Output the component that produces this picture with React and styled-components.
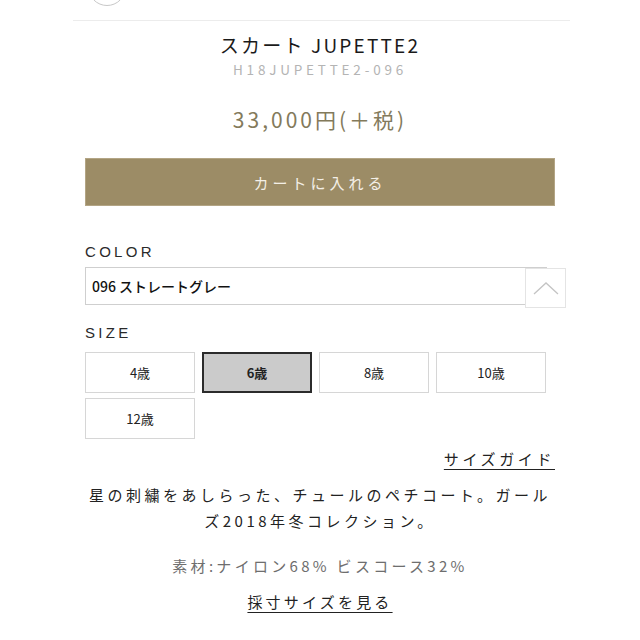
import React from "react";
import styled, { createGlobalStyle } from "styled-components";

const Global = createGlobalStyle`
  html, body { margin: 0; padding: 0; background: #fff; }
  body { font-family: "Noto Sans CJK JP", "Noto Sans", sans-serif; color: #222; }
  * { box-sizing: border-box; }
`;

const Page = styled.div`
  width: 640px;
  height: 640px;
  overflow: hidden;
  position: relative;
  background: #fff;
`;

const TopBar = styled.div`
  height: 21px;
  margin: 0 70px 0 73px;
  border-bottom: 1px solid #ececec;
  position: relative;
`;

const CircleBtn = styled.div`
  position: absolute;
  left: 15px;
  top: -32px;
  width: 38px;
  height: 38px;
  border-radius: 50%;
  border: 1.5px solid #c8c8c8;
`;

const Header = styled.div`
  display: flex;
  flex-direction: column;
  align-items: center;
`;

const Title = styled.h1`
  margin: 12px 0 0;
  font-size: 19px;
  font-weight: 400;
  letter-spacing: 2.2px;
  line-height: 24px;
  color: #1a1a1a;
`;

const Code = styled.div`
  margin-top: 4px;
  font-size: 13.5px;
  letter-spacing: 3.8px;
  color: #b4b4b4;
  line-height: 16px;
`;

const Price = styled.div`
  margin-top: 29px;
  font-size: 21px;
  letter-spacing: 3px;
  color: #837a5b;
  line-height: 26px;
`;

const Body = styled.div`
  padding: 0 85px;
`;

const CartButton = styled.button`
  display: block;
  width: 470px;
  height: 48px;
  margin-top: 26px;
  background: #9c8c66;
  border: 1px solid #b3a585;
  color: #f3efe6;
  font-family: inherit;
  font-size: 15px;
  letter-spacing: 4px;
`;

const Label = styled.div`
  margin-top: ${(p) => p.$mt}px;
  font-size: 15px;
  letter-spacing: 3.3px;
  color: #2a2a2a;
  line-height: 18px;
  font-family: "Liberation Sans", "Noto Sans", sans-serif;
`;

const SelectWrap = styled.div`
  position: relative;
  margin-top: 6px;
  width: 462px;
  height: 38px;
  border: 1px solid #cfcfcf;
  display: flex;
  align-items: center;
  padding-left: 6px;
  font-size: 14px;
  color: #111;
  font-weight: 500;
`;

const ArrowBox = styled.div`
  position: absolute;
  right: -20px;
  top: 0px;
  width: 41px;
  height: 40px;
  background: #fff;
  border: 1px solid #e4e4e4;
  display: flex;
  align-items: center;
  justify-content: center;
`;

const SizeGrid = styled.div`
  margin-top: 10px;
  display: grid;
  grid-template-columns: repeat(4, 110px);
  column-gap: 7px;
  row-gap: 5px;
`;

const SizeBtn = styled.div`
  height: 41px;
  display: flex;
  align-items: center;
  justify-content: center;
  font-size: 13px;
  color: #222;
  font-weight: ${(p) => (p.$active ? 700 : 400)};
  background: ${(p) => (p.$active ? "#cbcbcb" : "#fff")};
  border: ${(p) => (p.$active ? "2px solid #2b2b2b" : "1.5px solid #d6d6d6")};
`;

const GuideRow = styled.div`
  display: flex;
  justify-content: flex-end;
  margin-top: 10px;
`;

const LinkText = styled.span`
  font-size: 15px;
  letter-spacing: ${(p) => p.$ls || 3}px;
  color: #222;
  text-decoration: underline;
  text-underline-offset: 4px;
  line-height: 20px;
`;

const Desc = styled.p`
  margin: 13px 0 0;
  padding: 0 0;
  text-align: center;
  font-size: 15px;
  letter-spacing: 3.5px;
  line-height: 26px;
  color: #222;
`;

const Material = styled.div`
  margin-top: 21px;
  text-align: center;
  font-size: 15px;
  letter-spacing: 3.3px;
  color: #6e6e6e;
`;

const Center = styled.div`
  margin-top: 13px;
  text-align: center;
`;

const sizes = ["4歳", "6歳", "8歳", "10歳", "12歳"];

export default function App() {
  return (
    <Page>
      <Global />
      <TopBar>
        <CircleBtn />
      </TopBar>
      <Header>
        <Title>スカート JUPETTE2</Title>
        <Code>H18JUPETTE2-096</Code>
        <Price>33,000円(＋税)</Price>
      </Header>
      <Body>
        <CartButton>カートに入れる</CartButton>
        <Label $mt={37}>COLOR</Label>
        <SelectWrap>
          096 ストレートグレー
          <ArrowBox>
            <svg width="28" height="16" viewBox="0 0 28 16">
              <path d="M2 14 L14 3 L26 14" fill="none" stroke="#c4c4c4" strokeWidth="1.3" />
            </svg>
          </ArrowBox>
        </SelectWrap>
        <Label $mt={19}>SIZE</Label>
        <SizeGrid>
          {sizes.map((s) => (
            <SizeBtn key={s} $active={s === "6歳"}>{s}</SizeBtn>
          ))}
        </SizeGrid>
        <GuideRow>
          <LinkText $ls={3.6}>サイズガイド</LinkText>
        </GuideRow>
        <Desc>
          星の刺繍をあしらった、チュールのペチコート。ガールズ2018年冬コレクション。
        </Desc>
        <Material>素材:ナイロン68% ビスコース32%</Material>
        <Center>
          <LinkText $ls={3.2}>採寸サイズを見る</LinkText>
        </Center>
      </Body>
    </Page>
  );
}
